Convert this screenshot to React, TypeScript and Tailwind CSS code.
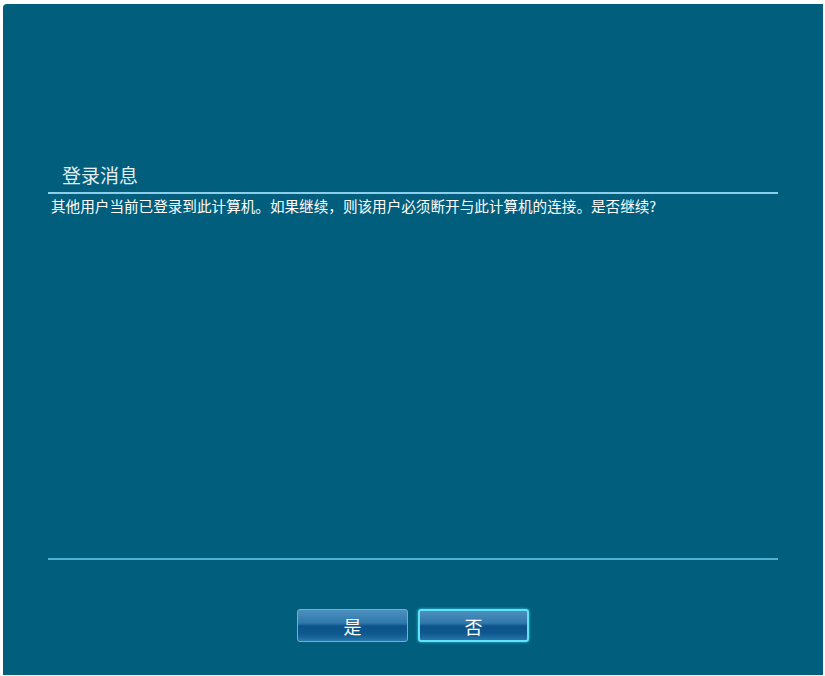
const font = { fontFamily: '"Microsoft YaHei", "Noto Sans CJK SC", "Noto Sans", sans-serif' };

function DialogButton({ label, focused }: { label: string; focused?: boolean }) {
  return (
    <button
      className={
        "w-[111px] h-[33px] rounded-[3px] text-[18px] leading-none text-white flex items-center justify-center " +
        "bg-[linear-gradient(to_bottom,#4d90bf_0%,#2f78ab_42%,#0c538a_52%,#0f5990_78%,#2776aa_100%)] " +
        (focused
          ? "border-2 border-[#5fe3f5] shadow-[0_0_3px_#3fd0ee]"
          : "border border-[#86a9c2]")
      }
    >
      {label}
    </button>
  );
}

export default function App() {
  return (
    <div className="w-[825px] h-[676px] bg-white pt-[4px] pl-[3px] pr-[2px] pb-[1px]" style={font}>
      <div className="h-full bg-[#015e7d] rounded-tl-[4px] flex flex-col px-[45px]">
        <div className="mt-[156px] h-[30px] leading-[30px] pl-[14px] text-[19px] text-[#e4f0f5]">
          登录消息
        </div>
        <div className="mt-[2px] h-[2px] bg-[#8ccfec]" />
        <div className="mt-[2px] h-[20px] leading-[20px] pl-[3px] text-[14.6px] text-white whitespace-nowrap">
          其他用户当前已登录到此计算机。如果继续，则该用户必须断开与此计算机的连接。是否继续?
        </div>
        <div className="mt-[342px] h-[2px] bg-[#4eb0d3]" />
        <div className="mt-[49px] flex justify-center gap-[10px]">
          <DialogButton label="是" />
          <DialogButton label="否" focused />
        </div>
      </div>
    </div>
  );
}
